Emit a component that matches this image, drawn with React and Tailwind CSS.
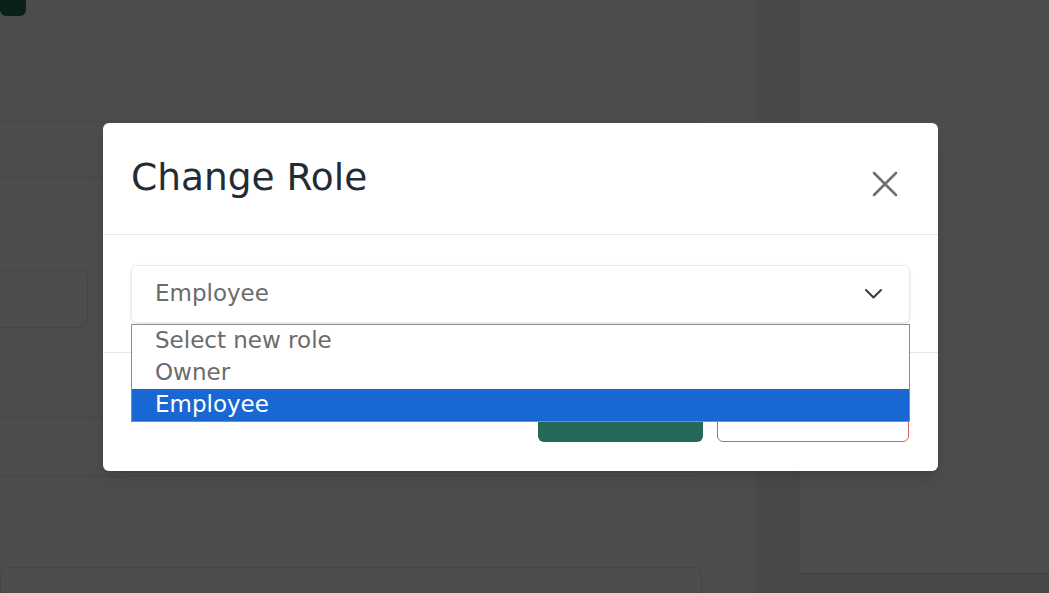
import React, { useState } from 'react'

const ROLES = ['Select new role', 'Owner', 'Employee']

function CloseIcon() {
  return (
    <svg width="26" height="26" viewBox="0 0 26 26" fill="none" stroke="#6f6f6f" strokeWidth="2.6" strokeLinecap="round">
      <path d="M2 2 L24 24 M24 2 L2 24" />
    </svg>
  )
}

function Chevron() {
  return (
    <svg width="19" height="12" viewBox="0 0 19 12" fill="none" stroke="#343a40" strokeWidth="2" strokeLinecap="round" strokeLinejoin="round">
      <path d="M2 2 L9.5 9.5 L17 2" />
    </svg>
  )
}

export default function App() {
  const [role] = useState('Employee')

  return (
    <div className="relative flex h-[593px] w-full overflow-hidden bg-gray-100 font-['DejaVu_Sans',sans-serif]">
      {/* pagina por baixo do modal */}
      <main className="w-[755px] shrink-0 bg-white">
        <div className="h-[16px] w-[26px] rounded-b-md bg-[#25695a]" />
        <div className="w-[702px]">
          <div className="h-[106px] border-b border-gray-200" />
          <div className="h-[56px] border-b border-gray-200" />
          <div className="h-[240px] border-b border-gray-200 pt-[92px]">
            <div className="-ml-4 h-[58px] w-[104px] rounded-md border border-gray-200" />
          </div>
          <div className="h-[59px] border-b border-gray-200" />
          <div className="mt-[90px] h-[60px] rounded-md border border-gray-200" />
        </div>
      </main>
      <div className="w-[45px] shrink-0" />
      <aside className="h-[573px] flex-1 bg-white shadow-sm" />

      {/* overlay + modal */}
      <div className="absolute inset-0 flex items-center bg-black/70">
        <div className="ml-[103px] w-[835px] rounded-md bg-white shadow-lg">
          <div className="flex h-[112px] items-center justify-between border-b border-[#e3e8ee] pl-[28px] pr-[40px]">
            <h2 className="text-[37.5px] leading-none text-[#232b35]">Change Role</h2>
            <button className="mt-[12px]">
              <CloseIcon />
            </button>
          </div>

          <div className="border-b border-[#e3e8ee] px-[28px] pb-[29px] pt-[30px]">
            <div className="relative">
              <div className="flex h-[58px] items-center justify-between rounded-md border border-[#e6ebf1] pl-[23px] pr-[26px] shadow-sm">
                <span className="text-[23px] text-[#6b6b6b]">{role}</span>
                <Chevron />
              </div>
              <ul className="absolute left-0 right-0 top-full z-10 mt-px border border-[#8d8d8d] bg-white">
                {ROLES.map((r) => (
                  <li
                    key={r}
                    className={`flex h-[32px] items-center pl-[23px] text-[23px] leading-none ${
                      r === role ? 'bg-[#1967d2] text-white' : 'text-[#6b6b6b]'
                    }`}
                  >
                    {r}
                  </li>
                ))}
              </ul>
            </div>
          </div>

          <div className="flex justify-end gap-[14px] px-[29px] py-[29px]">
            <button className="h-[60px] w-[165px] rounded-md bg-[#25695a] text-[20px] text-white">Save</button>
            <button className="h-[60px] w-[192px] rounded-md border border-[#e15b64] text-[20px] text-[#e15b64]">Cancel</button>
          </div>
        </div>
      </div>
    </div>
  )
}
